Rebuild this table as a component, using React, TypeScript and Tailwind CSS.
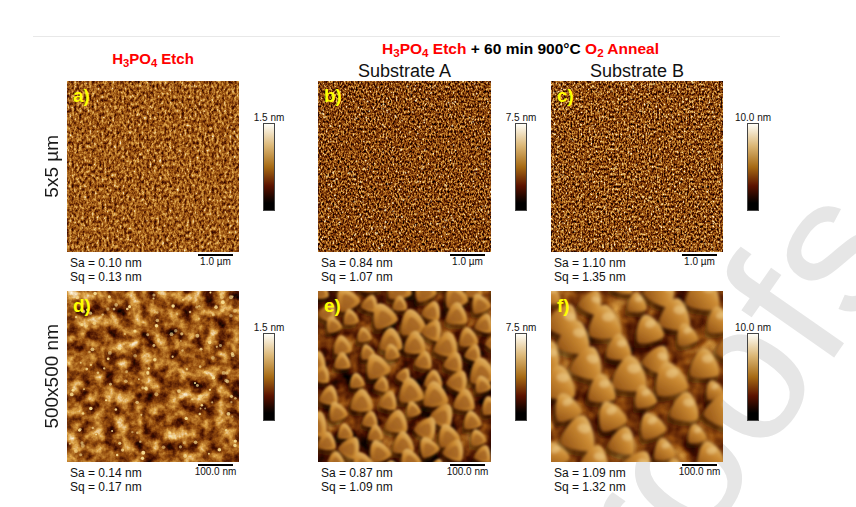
import React from "react";

// deterministic random so the textures stay put between renders
function rng(seed: number) {
  let a = seed;
  return () => {
    a |= 0;
    a = (a + 0x6d2b79f5) | 0;
    let t = Math.imul(a ^ (a >>> 15), 1 | a);
    t = (t + Math.imul(t ^ (t >>> 7), 61 | t)) ^ t;
    return ((t ^ (t >>> 14)) >>> 0) / 4294967296;
  };
}

const W = 172;
const H = 171;

const NoiseFilter = ({ id, freq, oct, seed, slope, icpt }: { id: string; freq: string; oct: number; seed: number; slope: number; icpt: number }) => (
  <filter id={id} x="0" y="0" width="100%" height="100%" colorInterpolationFilters="sRGB">
    <feTurbulence type="fractalNoise" baseFrequency={freq} numOctaves={oct} seed={seed} />
    <feColorMatrix
      type="matrix"
      values={`${slope} 0 0 0 ${icpt}  ${slope} 0 0 0 ${icpt}  ${slope} 0 0 0 ${icpt}  0 0 0 0 1`}
    />
    <feComponentTransfer>
      <feFuncR type="table" tableValues="0 0.27 0.59 0.86 1" />
      <feFuncG type="table" tableValues="0 0.06 0.31 0.63 0.98" />
      <feFuncB type="table" tableValues="0 0 0.06 0.27 0.92" />
    </feComponentTransfer>
  </filter>
);

const Dots = ({ seed, n, rMin, rMax, fill, blur }: { seed: number; n: number; rMin: number; rMax: number; fill: string; blur?: string }) => {
  const r = rng(seed);
  const dots = Array.from({ length: n }, () => ({ x: r() * W, y: r() * H, r: rMin + r() * (rMax - rMin), o: 0.5 + r() * 0.5 }));
  return (
    <g filter={blur}>
      {dots.map((d, i) => (
        <circle key={i} cx={d.x} cy={d.y} r={d.r} fill={fill} opacity={d.o} />
      ))}
    </g>
  );
};

const BUMP = "M0,-10 C5,-10 11,4 9,7.5 C6,10 -6,10 -9,7.5 C-11,4 -5,-10 0,-10 Z";

const Bumps = ({ id, v1, v2, size, seed, blur, hollow }: { id: string; v1: number[]; v2: number[]; size: number; seed: number; blur: number; hollow?: boolean }) => {
  const r = rng(seed);
  const pts: { x: number; y: number; s: number; a: number }[] = [];
  for (let i = -10; i <= 14; i++) {
    for (let j = -10; j <= 14; j++) {
      const x = i * v1[0] + j * v2[0] + (r() - 0.5) * 8;
      const y = i * v1[1] + j * v2[1] + (r() - 0.5) * 8;
      const s = size * (0.65 + r() * 0.6);
      const a = (r() - 0.5) * 60;
      if (x > -20 && x < W + 20 && y > -20 && y < H + 20) pts.push({ x, y, s, a });
    }
  }
  pts.sort((p, q) => p.y - q.y);
  return (
    <>
      <defs>
        <linearGradient id={`${id}-g`} x1="1" y1="0" x2="0" y2="1">
          <stop offset="0" stopColor="#f3d58e" />
          <stop offset="0.45" stopColor="#cb8a32" />
          <stop offset="1" stopColor="#8c4c12" />
        </linearGradient>
        <filter id={`${id}-sb`} x="-20%" y="-20%" width="140%" height="140%">
          <feGaussianBlur stdDeviation="2.4" />
        </filter>
        <filter id={`${id}-bb`} x="-20%" y="-20%" width="140%" height="140%">
          <feGaussianBlur stdDeviation={blur} />
        </filter>
      </defs>
      <g filter={`url(#${id}-sb)`}>
        {pts.map((p, i) => (
          <path key={i} d={BUMP} fill="#2a0d00" opacity={0.55} transform={`translate(${p.x - 2},${p.y + 4}) rotate(${p.a}) scale(${p.s * 1.1})`} />
        ))}
      </g>
      <g filter={`url(#${id}-bb)`}>
        {pts.map((p, i) => (
          <g key={i} transform={`translate(${p.x},${p.y}) rotate(${p.a}) scale(${p.s})`}>
            <path d={BUMP} fill={`url(#${id}-g)`} />
            {hollow ? (
              <path d={BUMP} fill="#9e6022" opacity={0.7} transform="translate(0,1.5) scale(0.55)" />
            ) : (
              <ellipse cx={2} cy={-3} rx={3.5} ry={2.5} fill="#fbe6b0" opacity={0.4} />
            )}
          </g>
        ))}
      </g>
    </>
  );
};

const Afm = ({ kind }: { kind: string }) => {
  const id = `afm-${kind}`;
  const cfg: Record<string, { freq: string; oct: number; seed: number; slope: number; icpt: number }> = {
    a: { freq: "0.4 0.28", oct: 3, seed: 4, slope: 1.1, icpt: -0.02 },
    b: { freq: "0.6 0.4", oct: 2, seed: 7, slope: 1.5, icpt: -0.3 },
    c: { freq: "0.6 0.4", oct: 2, seed: 11, slope: 1.5, icpt: -0.28 },
    d: { freq: "0.08", oct: 4, seed: 5, slope: 1.2, icpt: -0.08 },
    e: { freq: "0.05", oct: 3, seed: 9, slope: 1.0, icpt: -0.16 },
    f: { freq: "0.04", oct: 3, seed: 13, slope: 1.0, icpt: -0.08 },
  };
  const c = cfg[kind];
  return (
    <svg width="100%" height={H} className="block">
      <defs>
        <NoiseFilter id={id} {...c} />
        <filter id={`${id}-blur`}>
          <feGaussianBlur stdDeviation="0.5" />
        </filter>
      </defs>
      <rect width="100%" height="100%" filter={`url(#${id})`} />
      {kind === "a" && <Dots seed={19} n={70} rMin={0.5} rMax={0.9} fill="#e8c27a" />}
      {kind === "b" && <Dots seed={21} n={260} rMin={0.5} rMax={1.0} fill="#fff2c4" />}
      {kind === "c" && <Dots seed={23} n={420} rMin={0.5} rMax={0.95} fill="#f4d890" />}
      {kind === "d" && <Dots seed={25} n={150} rMin={0.9} rMax={2} fill="#f7dc90" blur={`url(#${id}-blur)`} />}
      {kind === "e" && <Bumps id={id} v1={[21, -13]} v2={[7, 18]} size={1.1} seed={31} blur={1.3} hollow />}
      {kind === "f" && <Bumps id={id} v1={[30, -18]} v2={[12, 25]} size={1.5} seed={37} blur={1.6} />}
    </svg>
  );
};

const ColorBar = ({ label }: { label: string }) => (
  <div className="ml-[24px] flex w-[12px] flex-col items-center pt-[32px]">
    <div className="whitespace-nowrap text-[10px] leading-[10px]">{label}</div>
    <div className="h-[88px] w-[12px] shrink-0 border border-[#444] bg-[linear-gradient(to_bottom,#fffef8,#dcb878_25%,#a66a14_50%,#5a1200_72%,#000_92%)]" />
  </div>
);

type PanelProps = { kind: string; sa: string; sq: string; scale: string; bar: string; width: string; ml: string };

const Panel = ({ kind, sa, sq, scale, bar, width, ml }: PanelProps) => (
  <div className={`flex ${ml}`}>
    <div className={width}>
      <div className="relative h-[171px]">
        <Afm kind={kind} />
        <span className="absolute left-[6px] top-[5px] text-[19px] font-bold leading-none text-[#ffff00]">{kind})</span>
      </div>
      <div className="flex items-start justify-between text-[12px] leading-[14px]">
        <div className="pl-[3px] pt-[4px]">
          <div>{sa}</div>
          <div>{sq}</div>
        </div>
        <div className="mr-[6px] mt-[2px] flex w-[35px] flex-col items-center">
          <div className="h-[2px] w-full bg-black" />
          <div className="whitespace-nowrap text-[10px] leading-[11px]">{scale}</div>
        </div>
      </div>
    </div>
    <ColorBar label={bar} />
  </div>
);

const Row = ({ label, panels, h }: { label: string; panels: Omit<PanelProps, "width" | "ml">[]; h: string }) => (
  <div className={`flex ${h}`}>
    <div className="flex h-[171px] w-[67px] justify-end pr-[4px]">
      <div className="flex w-[22px] items-center justify-center">
        <span className="rotate-180 whitespace-nowrap text-[19px] leading-[22px] text-[#1a1a1a] [writing-mode:vertical-rl]">{label}</span>
      </div>
    </div>
    <Panel {...panels[0]} width="w-[172px]" ml="ml-0" />
    <Panel {...panels[1]} width="w-[173px]" ml="ml-[43px]" />
    <Panel {...panels[2]} width="w-[172px]" ml="ml-[24px]" />
  </div>
);

export default function App() {
  return (
    <div className="relative h-[507px] w-[856px] overflow-hidden bg-white font-['Liberation_Sans',Arial,sans-serif] text-[#111]">
      {/* journal watermark */}
      <span className="absolute left-[545px] top-[555px] origin-left rotate-[-55deg] whitespace-nowrap text-[195px] leading-none text-[#e6e6e6]">
        proofs
      </span>

      <div className="relative z-10">
        <div className="h-[36px]" />
        <div className="ml-[33px] h-px w-[747px] bg-[#e8e8e8]" />

        {/* column titles */}
        <div className="flex h-[44px]">
          <div className="w-[67px]" />
          <div className="w-[172px] pt-[14px] text-center text-[15px] font-bold leading-[16px] text-[#ff0000]">
            H<sub>3</sub>PO<sub>4</sub> Etch
          </div>
          <div className="ml-[79px] flex w-[405px] flex-col">
            <div className="pt-[4px] text-center text-[15.5px] font-bold leading-[16px] text-black">
              <span className="text-[#ff0000]">
                H<sub>3</sub>PO<sub>4</sub> Etch
              </span>{" "}
              + 60 min 900°C{" "}
              <span className="text-[#ff0000]">
                O<sub>2</sub> Anneal
              </span>
            </div>
            <div className="mt-[5px] flex text-[18px] leading-[18px] text-[#111]">
              <div className="w-[173px] text-center">Substrate A</div>
              <div className="ml-[60px] w-[172px] text-center">Substrate B</div>
            </div>
          </div>
        </div>

        <Row
          label="5x5 µm"
          h="h-[210px]"
          panels={[
            { kind: "a", sa: "Sa = 0.10 nm", sq: "Sq = 0.13 nm", scale: "1.0 µm", bar: "1.5 nm" },
            { kind: "b", sa: "Sa = 0.84 nm", sq: "Sq = 1.07 nm", scale: "1.0 µm", bar: "7.5 nm" },
            { kind: "c", sa: "Sa = 1.10 nm", sq: "Sq = 1.35 nm", scale: "1.0 µm", bar: "10.0 nm" },
          ]}
        />
        <Row
          label="500x500 nm"
          h="h-[216px]"
          panels={[
            { kind: "d", sa: "Sa = 0.14 nm", sq: "Sq = 0.17 nm", scale: "100.0 nm", bar: "1.5 nm" },
            { kind: "e", sa: "Sa = 0.87 nm", sq: "Sq = 1.09 nm", scale: "100.0 nm", bar: "7.5 nm" },
            { kind: "f", sa: "Sa = 1.09 nm", sq: "Sq = 1.32 nm", scale: "100.0 nm", bar: "10.0 nm" },
          ]}
        />
      </div>
    </div>
  );
}
